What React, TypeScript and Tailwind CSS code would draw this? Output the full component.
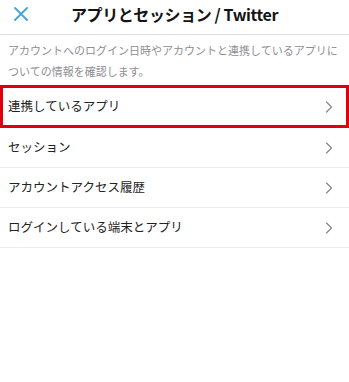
import React from "react";

const items = [
  "連携しているアプリ",
  "セッション",
  "アカウントアクセス履歴",
  "ログインしている端末とアプリ",
];

function Chevron() {
  return (
    <svg width="8" height="12" viewBox="0 0 8 12" fill="none" className="shrink-0">
      <path d="M1.5 1L6.5 6L1.5 11" stroke="#8a8a8e" strokeWidth="1.3" strokeLinecap="round" strokeLinejoin="round" />
    </svg>
  );
}

export default function App() {
  return (
    <div
      className="w-[349px] h-[382px] bg-white overflow-hidden"
      style={{ fontFamily: '"Noto Sans CJK JP", "Noto Sans", sans-serif' }}
    >
      <div className="relative flex h-[35px] justify-center border-b border-[#dcdcdc] pt-[2px]">
        <svg className="absolute left-[14px] top-[7px]" width="14" height="14" viewBox="0 0 14 14">
          <path d="M1 1L13 13M13 1L1 13" stroke="#3ea6dd" strokeWidth="1.8" strokeLinecap="round" />
        </svg>
        <h1 className="text-[16px] leading-[24px] font-bold text-[#141414] tracking-tight">
          アプリとセッション / Twitter
        </h1>
      </div>

      <p className="px-[8px] pt-[5px] pb-[3px] text-[11px] leading-[21px] text-[#8e8e93]">
        アカウントへのログイン日時やアカウントと連携しているアプリについての情報を確認します。
      </p>

      <div>
        {items.map((label, i) => (
          <div
            key={label}
            className={
              i === 0
                ? "flex h-[43px] items-center justify-between border-[3px] border-[#e0000b] pl-[5px] pr-[13px]"
                : "flex h-[40px] items-center justify-between border-b border-[#ebebeb] pl-[8px] pr-[16px]"
            }
          >
            <span className="text-[12.5px] text-[#222]">{label}</span>
            <Chevron />
          </div>
        ))}
      </div>
    </div>
  );
}
